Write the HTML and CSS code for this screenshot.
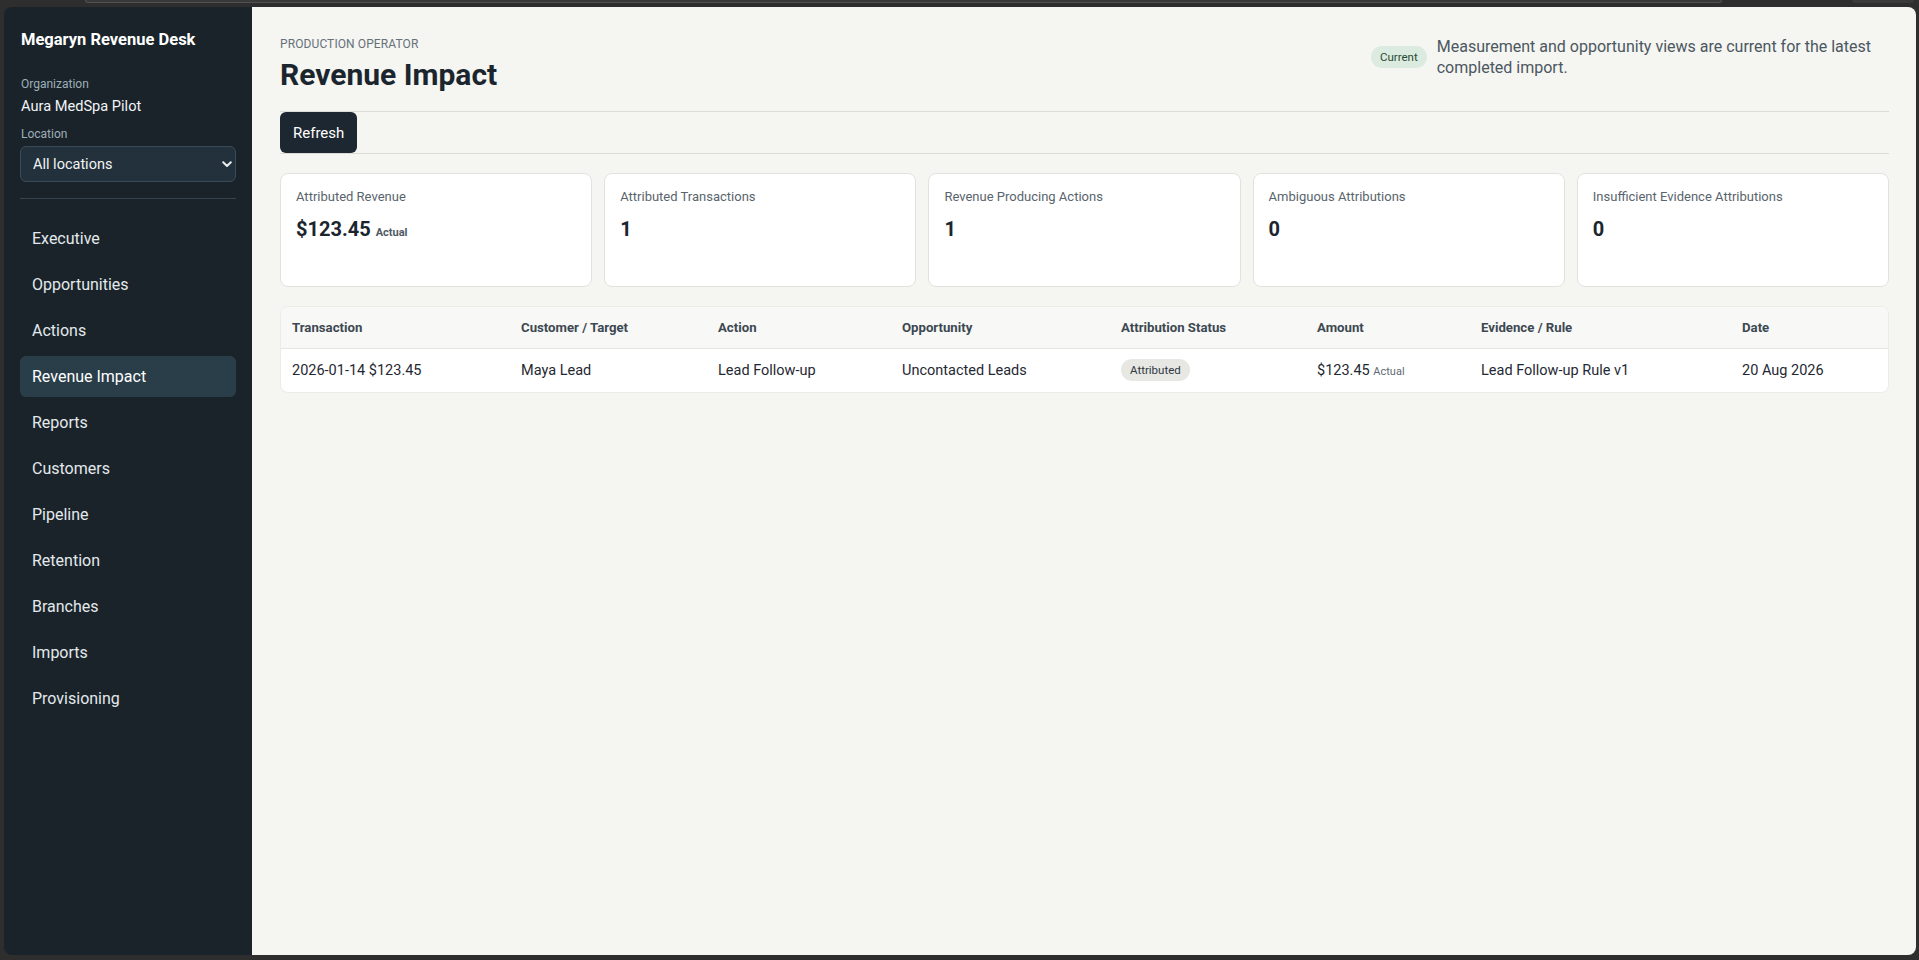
FILE: index.html
```html
<!DOCTYPE html>
<html lang="en">
<head>
<meta charset="utf-8">
<title>Revenue Impact - Megaryn Revenue Desk</title>
<link rel="stylesheet" href="styles.css">
</head>
<body>
<div class="chrome">
  <div class="chrome-bar"></div>
  <div class="chrome-pill"></div>
</div>
<div class="app">
  <aside class="sidebar">
    <div class="brand">Megaryn Revenue Desk</div>
    <div class="field-label org-label">Organization</div>
    <div class="org-name">Aura MedSpa Pilot</div>
    <div class="field-label loc-label">Location</div>
    <div class="select-wrap">
      <select class="loc-select">
        <option>All locations</option>
      </select>
      <svg class="chev" width="10" height="7" viewBox="0 0 10 7"><path d="M1.2 1.2 L5 5 L8.8 1.2" fill="none" stroke="#e8edf0" stroke-width="2" stroke-linecap="round" stroke-linejoin="round"/></svg>
    </div>
    <div class="divider"></div>
    <nav class="nav">
      <a class="nav-item">Executive</a>
      <a class="nav-item">Opportunities</a>
      <a class="nav-item">Actions</a>
      <a class="nav-item active">Revenue Impact</a>
      <a class="nav-item">Reports</a>
      <a class="nav-item">Customers</a>
      <a class="nav-item">Pipeline</a>
      <a class="nav-item">Retention</a>
      <a class="nav-item">Branches</a>
      <a class="nav-item">Imports</a>
      <a class="nav-item">Provisioning</a>
    </nav>
  </aside>
  <main class="main">
    <header class="page-header">
      <div class="title-block">
        <div class="eyebrow">PRODUCTION OPERATOR</div>
        <h1 class="page-title">Revenue Impact</h1>
      </div>
      <div class="status-block">
        <span class="badge-current">Current</span>
        <p class="status-text">Measurement and opportunity views are current for the latest<br>completed import.</p>
      </div>
    </header>
    <div class="toolbar">
      <button class="btn-refresh">Refresh</button>
    </div>
    <section class="cards">
      <div class="card">
        <div class="card-label">Attributed Revenue</div>
        <div class="card-value">$123.45<span class="card-unit">Actual</span></div>
      </div>
      <div class="card">
        <div class="card-label">Attributed Transactions</div>
        <div class="card-value">1</div>
      </div>
      <div class="card">
        <div class="card-label">Revenue Producing Actions</div>
        <div class="card-value">1</div>
      </div>
      <div class="card">
        <div class="card-label">Ambiguous Attributions</div>
        <div class="card-value">0</div>
      </div>
      <div class="card">
        <div class="card-label">Insufficient Evidence Attributions</div>
        <div class="card-value">0</div>
      </div>
    </section>
    <div class="table-wrap">
      <table class="data-table">
        <colgroup>
          <col class="c1"><col class="c2"><col class="c3"><col class="c4"><col class="c5"><col class="c6"><col class="c7"><col class="c8">
        </colgroup>
        <thead>
          <tr>
            <th>Transaction</th>
            <th>Customer / Target</th>
            <th>Action</th>
            <th>Opportunity</th>
            <th>Attribution Status</th>
            <th>Amount</th>
            <th>Evidence / Rule</th>
            <th>Date</th>
          </tr>
        </thead>
        <tbody>
          <tr>
            <td>2026-01-14 $123.45</td>
            <td>Maya Lead</td>
            <td>Lead Follow-up</td>
            <td>Uncontacted Leads</td>
            <td><span class="pill">Attributed</span></td>
            <td>$123.45 <span class="amt-unit">Actual</span></td>
            <td>Lead Follow-up Rule v1</td>
            <td>20 Aug 2026</td>
          </tr>
        </tbody>
      </table>
    </div>
  </main>
</div>
</body>
</html>
```

FILE: styles.css
```css
* { box-sizing: border-box; }

html, body {
  margin: 0;
  padding: 0;
  height: 960px;
  overflow: hidden;
}

body {
  background: #2e2e2e;
  font-family: "Segoe UI", Roboto, "Noto Sans", sans-serif;
  color: #1f2933;
}

.chrome {
  height: 7px;
  display: flex;
  align-items: flex-start;
}

.chrome-bar {
  margin-left: 85px;
  width: 1637px;
  height: 3px;
  background: #393939;
  border-bottom: 1px solid #515151;
  border-left: 1px solid #515151;
  border-right: 1px solid #515151;
  border-radius: 0 0 6px 6px;
}

.chrome-pill {
  margin-left: 130px;
  width: 62px;
  height: 3px;
  background: #3a3a3a;
  border-radius: 0 0 6px 6px;
}

.app {
  margin: 0 3px 0 4px;
  height: 948px;
  display: flex;
  border-radius: 8px;
  overflow: hidden;
}

/* Sidebar */
.sidebar {
  width: 248px;
  flex: 0 0 248px;
  background: #1a232a;
  padding: 22px 16px 0 16px;
  display: flex;
  flex-direction: column;
}

.brand {
  font-size: 16.5px;
  line-height: 22px;
  font-weight: 700;
  color: #ffffff;
  padding-left: 1px;
}

.field-label {
  font-size: 12px;
  line-height: 16px;
  color: #9eafb8;
  padding-left: 1px;
}

.org-label { margin-top: 25px; }

.org-name {
  margin-top: 4px;
  font-size: 14.6px;
  line-height: 20px;
  color: #f1f4f6;
  padding-left: 1px;
}

.loc-label { margin-top: 10px; }

.select-wrap {
  margin-top: 4px;
  position: relative;
}

.loc-select {
  width: 100%;
  height: 36px;
  appearance: none;
  -webkit-appearance: none;
  background: #22313b;
  border: 1px solid #3b4b56;
  border-radius: 6px;
  color: #f1f4f6;
  font-family: inherit;
  font-size: 14.5px;
  padding: 0 30px 0 12px;
  outline: none;
}

.chev {
  position: absolute;
  right: 4px;
  top: 15px;
  pointer-events: none;
}

.divider {
  margin-top: 16px;
  height: 1px;
  background: #34434d;
}

.nav {
  margin-top: 19px;
  display: flex;
  flex-direction: column;
  gap: 5px;
}

.nav-item {
  display: block;
  height: 41px;
  line-height: 41px;
  padding: 0 12px;
  font-size: 16px;
  color: #e3e9ec;
  border-radius: 6px;
  text-decoration: none;
}

.nav-item.active {
  background: #2a3e4a;
  color: #ffffff;
}

/* Main */
.main {
  flex: 1;
  background: #f5f5f1;
  padding: 29px 29px 0 28px;
  display: flex;
  flex-direction: column;
}

.page-header {
  display: flex;
  justify-content: space-between;
  align-items: flex-start;
  margin-bottom: 18px;
}

.eyebrow {
  font-size: 12px;
  line-height: 16px;
  color: #66717a;
  letter-spacing: 0.1px;
}

.page-title {
  margin: 5px 0 0 0;
  font-size: 30px;
  line-height: 36px;
  font-weight: 700;
  color: #1b252e;
}

.status-block {
  display: flex;
  align-items: center;
  gap: 10px;
  margin-right: 18px;
}

.badge-current {
  display: inline-block;
  height: 22px;
  line-height: 22px;
  padding: 0 9px;
  border-radius: 11px;
  background: #dcebe0;
  color: #2a4a33;
  font-size: 11.5px;
}

.status-text {
  margin: 0;
  font-size: 16px;
  line-height: 21px;
  color: #4b5761;
}

.toolbar {
  border-top: 1px solid #dcdcd6;
  border-bottom: 1px solid #dcdcd6;
  display: flex;
}

.btn-refresh {
  height: 41px;
  padding: 0 13px;
  background: #1d2731;
  color: #ffffff;
  border: none;
  border-radius: 6px;
  font-family: inherit;
  font-size: 15px;
}

.cards {
  margin-top: 19px;
  display: grid;
  grid-template-columns: repeat(5, 1fr);
  gap: 12px;
}

.card {
  height: 114px;
  background: #ffffff;
  border: 1px solid #e2e2dd;
  border-radius: 8px;
  padding: 14px 15px;
}

.card-label {
  font-size: 13px;
  line-height: 18px;
  color: #59646d;
}

.card-value {
  margin-top: 10px;
  font-size: 20px;
  line-height: 26px;
  font-weight: 700;
  color: #1b252e;
}

.card-unit {
  margin-left: 5px;
  font-size: 11px;
  font-weight: 700;
  color: #4e5963;
}

.table-wrap {
  margin-top: 19px;
  background: #ffffff;
  border: 1px solid #ecece7;
  border-radius: 8px;
  overflow: hidden;
}

.data-table {
  width: 100%;
  border-collapse: collapse;
  table-layout: fixed;
}

.c1 { width: 229px; }
.c2 { width: 197px; }
.c3 { width: 184px; }
.c4 { width: 219px; }
.c5 { width: 196px; }
.c6 { width: 164px; }
.c7 { width: 261px; }
.c8 { width: 157px; }

.data-table th {
  height: 41px;
  background: #f8f8f6;
  border-bottom: 1px solid #e6e6e1;
  text-align: left;
  font-size: 13.2px;
  font-weight: 700;
  color: #3d4852;
  padding: 0 11px;
}

.data-table td {
  height: 44px;
  font-size: 14.5px;
  color: #1f2933;
  padding: 0 11px;
  white-space: nowrap;
}

.pill {
  display: inline-block;
  height: 22px;
  line-height: 22px;
  padding: 0 9px;
  border-radius: 11px;
  background: #e7e8e3;
  color: #2f3a41;
  font-size: 11.5px;
}

.amt-unit {
  font-size: 11px;
  color: #5f6a73;
}
```
